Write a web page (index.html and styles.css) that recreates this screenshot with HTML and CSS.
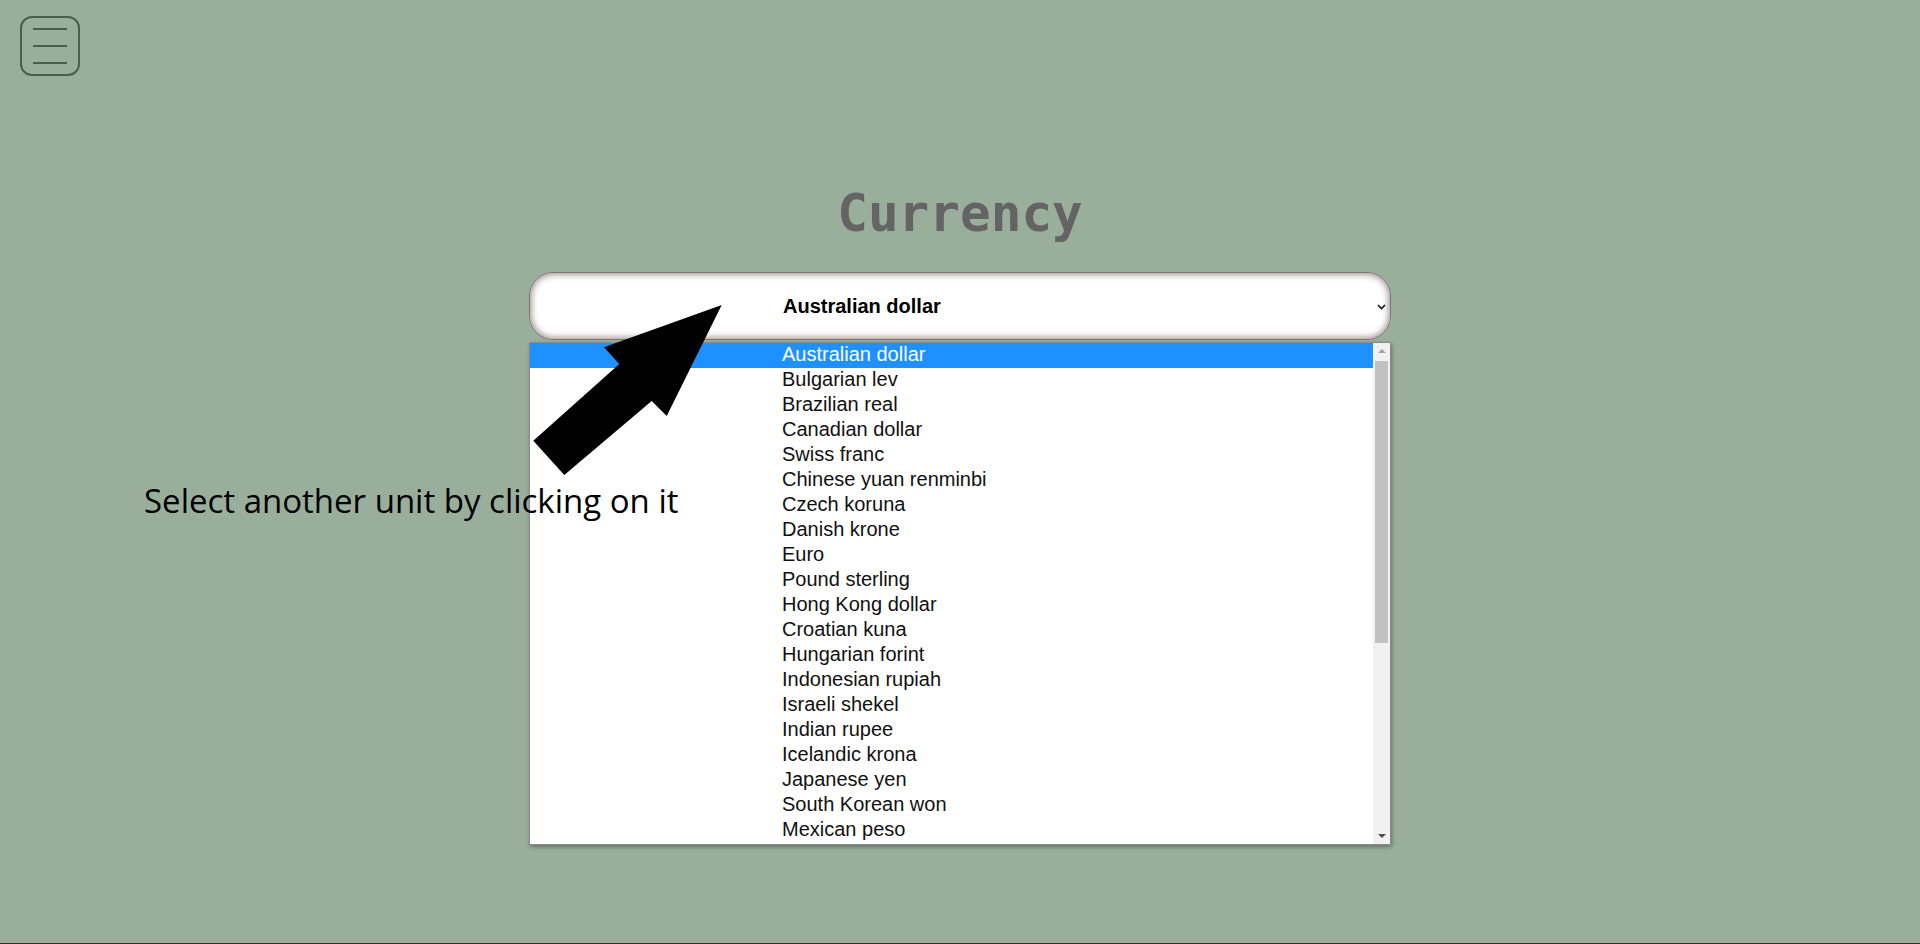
FILE: index.html
```html
<!DOCTYPE html>
<html lang="en">
<head>
<meta charset="utf-8">
<title>Currency</title>
<link rel="stylesheet" href="styles.css">
</head>
<body>
<div class="page">
  <header class="topbar">
    <button class="menu-btn" aria-label="Menu"><span></span><span></span><span></span></button>
  </header>
  <main class="converter">
    <h1 class="title">Currency</h1>
    <div class="picker">
      <div class="select">
        <span class="select-value">Australian dollar</span>
        <svg class="chevron" width="9" height="6" viewBox="0 0 9 6"><path d="M1 1 L4.5 4.5 L8 1" fill="none" stroke="#111" stroke-width="1.6"/></svg>
      </div>
      <div class="dropdown">
        <ul class="options">
          <li class="active">Australian dollar</li>
          <li>Bulgarian lev</li>
          <li>Brazilian real</li>
          <li>Canadian dollar</li>
          <li>Swiss franc</li>
          <li>Chinese yuan renminbi</li>
          <li>Czech koruna</li>
          <li>Danish krone</li>
          <li>Euro</li>
          <li>Pound sterling</li>
          <li>Hong Kong dollar</li>
          <li>Croatian kuna</li>
          <li>Hungarian forint</li>
          <li>Indonesian rupiah</li>
          <li>Israeli shekel</li>
          <li>Indian rupee</li>
          <li>Icelandic krona</li>
          <li>Japanese yen</li>
          <li>South Korean won</li>
          <li>Mexican peso</li>
        </ul>
        <div class="scrollbar">
          <span class="sb-arrow up"></span>
          <span class="sb-thumb"></span>
          <span class="sb-arrow down"></span>
        </div>
      </div>
    </div>
  </main>
  <div class="hint">
    <svg class="hint-arrow" width="220" height="200" viewBox="0 0 220 200"><polygon points="201.7,15 84,57.3 99.3,74 13.3,150.7 44.3,185 131.7,111 146.7,126" fill="#000"/></svg>
    <p class="hint-text">Select another unit by clicking on it</p>
  </div>
</div>
</body>
</html>
```

FILE: styles.css
```css
* { box-sizing: border-box; }

html, body {
  margin: 0;
  padding: 0;
  background: #9aaf9b;
}

.page {
  position: relative;
  height: 944px;
  border-bottom: 1px solid #3b2c2c;
  overflow: hidden;
}

.topbar {
  padding: 16px 20px 0;
  display: flex;
}

.menu-btn {
  width: 60px;
  height: 60px;
  margin: 0;
  padding: 0;
  background: transparent;
  border: 2px solid #4a5e4b;
  border-radius: 12px;
  display: flex;
  flex-direction: column;
  align-items: center;
  justify-content: center;
  gap: 15px;
}

.menu-btn span {
  display: block;
  width: 34px;
  height: 2px;
  background: #4a5e4b;
}

.converter {
  display: flex;
  flex-direction: column;
  align-items: center;
}

.title {
  margin: 109px 0 0;
  font-family: "DejaVu Sans Mono", "Liberation Mono", monospace;
  font-weight: bold;
  font-size: 51px;
  line-height: 58px;
  color: #646464;
}

.picker {
  position: relative;
  margin-top: 29px;
  width: 862px;
}

.select {
  height: 68px;
  background: #fff;
  border: 1px solid #7d7474;
  border-radius: 24px;
  box-shadow: inset 0 0 7px 1px rgba(110, 90, 90, 0.75);
  display: flex;
  align-items: center;
  padding: 0 4px 0 253px;
  font-family: "Liberation Sans", Arial, sans-serif;
  font-weight: bold;
  font-size: 20px;
  color: #000;
}

.select-value {
  flex: 1;
}

.chevron {
  display: block;
  margin-top: 2px;
}

.dropdown {
  position: absolute;
  top: 70px;
  left: 0;
  width: 100%;
  height: 503px;
  background: #fff;
  border: 1px solid #8a8a8a;
  box-shadow: 1px 2px 4px rgba(0, 0, 0, 0.35);
  display: flex;
  overflow: hidden;
}

.options {
  flex: 1;
  margin: 0;
  padding: 0;
  list-style: none;
  font-family: "Liberation Sans", Arial, sans-serif;
  font-size: 20px;
  color: #111;
}

.options li {
  height: 25px;
  line-height: 23px;
  padding-left: 252px;
}

.options li.active {
  background: #1e90ff;
  color: #fff;
}

.scrollbar {
  width: 17px;
  background: #f1f1f1;
  display: flex;
  flex-direction: column;
  align-items: center;
  padding: 6px 0 6px;
}

.sb-arrow {
  width: 0;
  height: 0;
  border-left: 4px solid transparent;
  border-right: 4px solid transparent;
}

.sb-arrow.up {
  border-bottom: 4px solid #a3a3a3;
}

.sb-arrow.down {
  margin-top: auto;
  border-top: 4px solid #505050;
}

.sb-thumb {
  width: 13px;
  height: 282px;
  margin-top: 8px;
  background: #c1c1c1;
}

.hint {
  position: absolute;
  top: 0;
  left: 0;
}

.hint-arrow {
  position: absolute;
  left: 520px;
  top: 290px;
}

.hint-text {
  position: absolute;
  left: 144px;
  top: 481px;
  margin: 0;
  white-space: nowrap;
  font-family: "Open Sans", "Noto Sans", sans-serif;
  font-size: 33px;
  line-height: 40px;
  color: #000;
}
```
